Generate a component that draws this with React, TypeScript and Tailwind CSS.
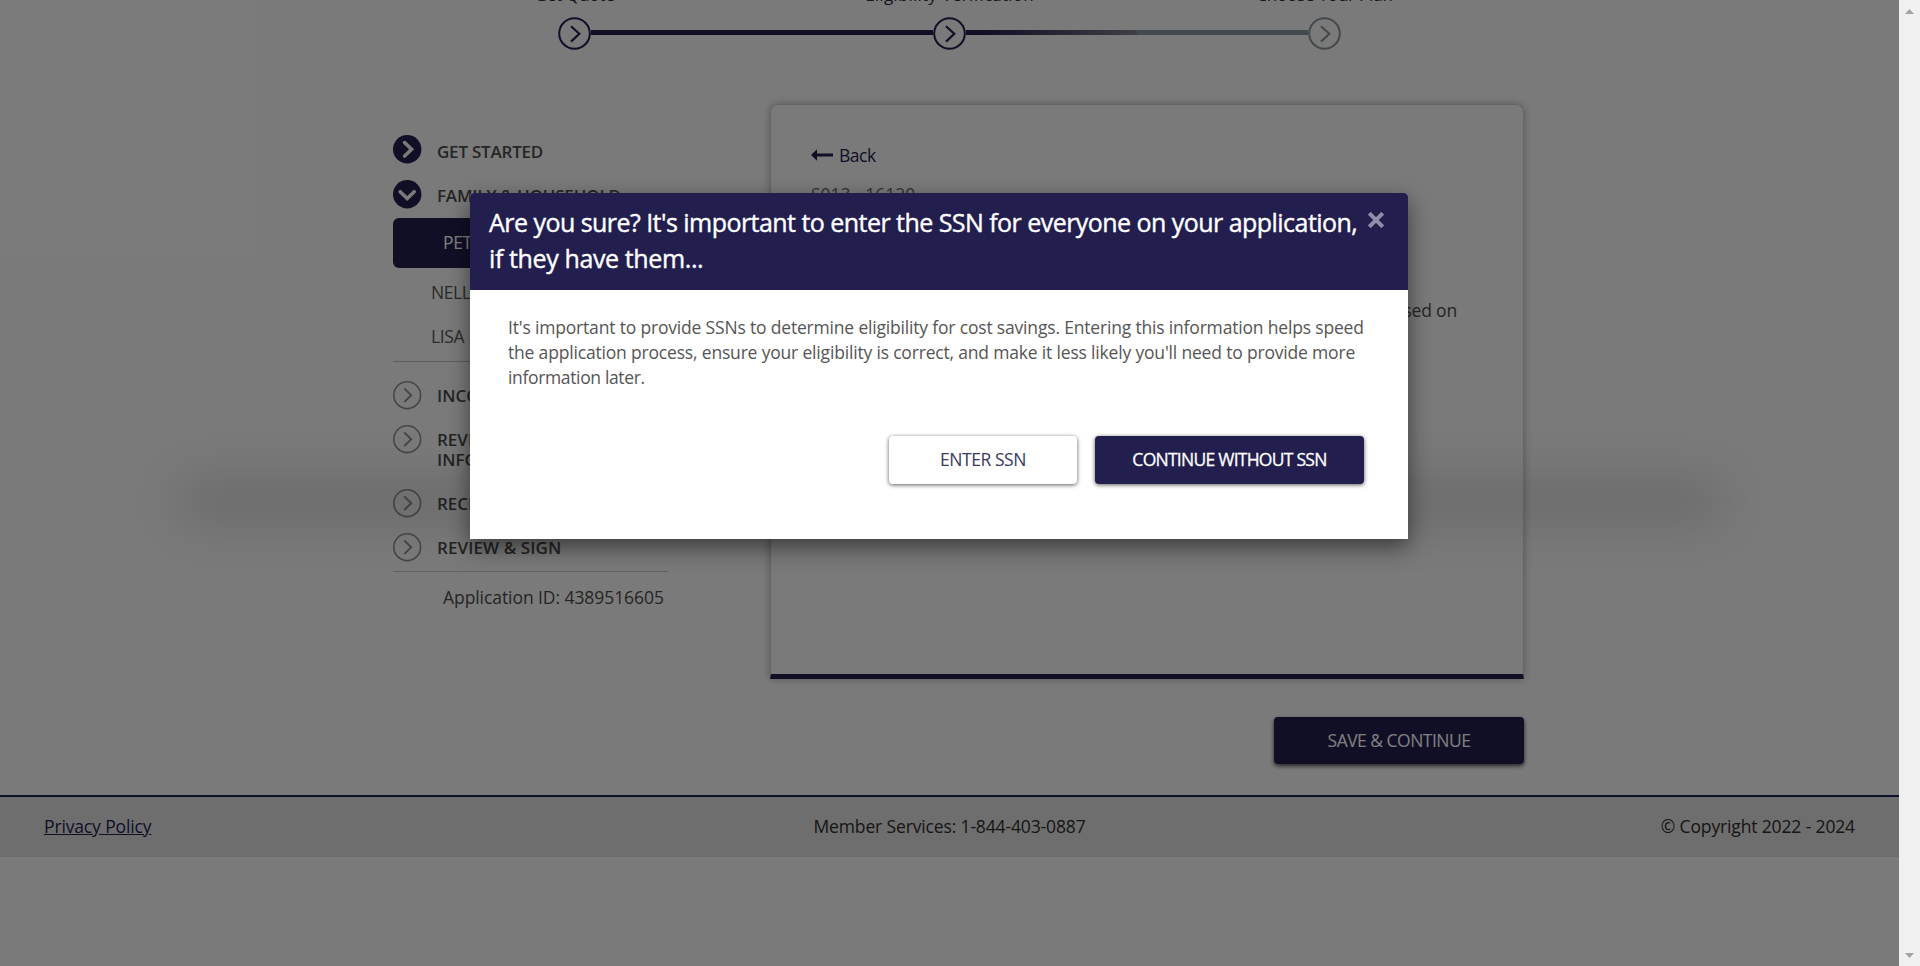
import type { ReactNode } from "react";

function StepCircle({ tone }: { tone: string }) {
  return (
    <svg viewBox="0 0 33 33" className={`h-[33px] w-[33px] shrink-0 ${tone}`} fill="none" stroke="currentColor" strokeWidth="2">
      <circle cx="16.5" cy="16.5" r="15.3" />
      <path d="M13 9.2 21.3 16.8 13 24.6" strokeWidth="2.2" />
    </svg>
  );
}

function NavIcon({ kind }: { kind: "done" | "open" | "todo" }) {
  if (kind === "todo") {
    return (
      <svg viewBox="0 0 28 28" className="h-7 w-7 shrink-0 overflow-visible text-[#8c8c8c]" fill="none" stroke="currentColor">
        <circle cx="14.2" cy="14.2" r="13.4" strokeWidth="1.6" />
        <path d="M11.3 7.4 18.2 14.2 11.3 21" strokeWidth="1.9" />
      </svg>
    );
  }
  return (
    <svg viewBox="0 0 28 28" className="h-7 w-7 shrink-0 overflow-visible text-[#221e4c]">
      <circle cx="14.2" cy="14.2" r="14.2" fill="currentColor" />
      <path
        d={kind === "done" ? "M11.6 7.6 18.6 14.2 11.6 21" : "M7.2 11.7 14.2 18.5 21.2 11.7"}
        fill="none"
        stroke="#f5f5f5"
        strokeWidth="3.6"
        strokeLinecap="round"
      />
    </svg>
  );
}

function NavRow({ kind, height, pad, children }: { kind: "done" | "open" | "todo"; height: string; pad: string; children: ReactNode }) {
  return (
    <div className={`flex items-start gap-4 ${height}`}>
      <NavIcon kind={kind} />
      <div className={`whitespace-nowrap text-[17px] leading-5 font-semibold text-[#4a4a4a] ${pad}`}>{children}</div>
    </div>
  );
}

function Stepper() {
  return (
    <div className="mx-auto w-[1125px]">
      <div className="-mt-[15px] grid h-5 grid-cols-3 text-center text-[17px] leading-5 text-[#2b2b3c]">
        <div className="tracking-[-0.2px]">Get Quote</div>
        <div className="tracking-[0.22px]">Eligibility Verification</div>
        <div className="tracking-[-0.2px]">Choose Your Plan</div>
      </div>
      <div className="mt-3 flex items-center px-[171px]">
        <StepCircle tone="text-[#221e4c]" />
        <div className="mb-[2px] h-[5px] flex-1 bg-[#221e4c]" />
        <StepCircle tone="text-[#221e4c]" />
        <div className="mb-[2px] h-[5px] flex-1 bg-linear-to-r from-[#221e4c] from-5% via-[#7f8188] via-50% to-[#88939a] to-50%" />
        <StepCircle tone="text-[#88939a]" />
      </div>
    </div>
  );
}

function Sidebar() {
  return (
    <nav className="w-[275px] shrink-0 pt-[31px]">
      <NavRow kind="done" height="h-[45px]" pad="pt-[7px] tracking-[-0.22px]">GET STARTED</NavRow>
      <NavRow kind="open" height="h-[38px]" pad="pt-[6px] tracking-[-0.2px]">FAMILY &amp; HOUSEHOLD</NavRow>
      <div className="flex h-[50px] items-center rounded-md bg-[#221e4c] pb-px pl-[50px] text-[17.5px] tracking-[-0.4px] text-white">PETER</div>
      <div className="mt-[2px] mb-[3px] pl-[38px] text-[17.5px] leading-[44px] tracking-[-0.4px] text-[#555]">
        <div>NELLY</div>
        <div>LISA</div>
      </div>
      <div className="h-px bg-[#bbb]" />
      <div className="pt-[19px]">
        <NavRow kind="todo" height="h-11" pad="pt-[5px]">INCOME</NavRow>
        <NavRow kind="todo" height="h-16" pad="pt-[5px]">
          REVIEW
          <br />
          INFO
        </NavRow>
        <NavRow kind="todo" height="h-11" pad="pt-[5px]">RECENT</NavRow>
        <NavRow kind="todo" height="h-[38px]" pad="pt-[5px] tracking-[0.08px]">REVIEW &amp; SIGN</NavRow>
      </div>
      <div className="h-px bg-[#c4c4c4]" />
      <div className="mt-[11px] pl-[50px] text-[17.5px] leading-7 tracking-[-0.07px] whitespace-nowrap text-[#4a4a4a]">Application ID: 4389516605</div>
    </nav>
  );
}

function PageCard() {
  return (
    <section className="flex h-[575px] w-[754px] flex-col rounded-t-lg border border-b-[5px] border-[#c8c8c8] border-b-[#221e4c] px-10 pt-[38px] text-[17.5px] leading-6 shadow-[0_0_8px_rgba(0,0,0,0.28)]">
      <div className="flex items-center gap-[6px] tracking-[-0.5px] text-[#221e4c]">
        <svg viewBox="0 0 22 12" className="h-3 w-[22px]" fill="currentColor">
          <path d="M0 6 6 .3V4.6H22V7.6H6V11.7Z" />
        </svg>
        Back
      </div>
      <div className="mt-[15px] text-[#666]">S013 - 16120</div>
      <div className="mt-[92px] pr-[26px] text-right tracking-[-0.18px] text-[#4a4a4a]">based on</div>
    </section>
  );
}

function Modal() {
  return (
    <div className="absolute top-[193px] left-[470px] flex h-[346px] w-[938px] flex-col rounded-t bg-white shadow-[0_8px_22px_rgba(0,0,0,0.5)]">
      <div className="flex h-[97px] shrink-0 items-start justify-between rounded-t bg-[#221e4e] pt-[11px] pr-6 pl-[19px]">
        <h2 className="text-[25px] leading-9 font-medium tracking-[-0.54px] whitespace-nowrap text-white [-webkit-text-stroke:0.4px_white]">
          Are you sure? It's important to enter the SSN for everyone on your application,
          <br />
          <span className="tracking-[-0.38px]">if they have them...</span>
        </h2>
        <svg viewBox="0 0 16 16" className="mt-2 h-4 w-4 shrink-0 text-[#918fa8]" stroke="currentColor" strokeWidth="4">
          <path d="M1.3 1.3 14.7 14.7M14.7 1.3 1.3 14.7" />
        </svg>
      </div>
      <p className="pt-[25px] pl-[38px] text-[17.5px] leading-[25px] tracking-[-0.18px] whitespace-nowrap text-[#555]">
        It's important to provide SSNs to determine eligibility for cost savings. Entering this information helps speed
        <br />
        the application process, ensure your eligibility is correct, and make it less likely you'll need to provide more
        <br />
        <span className="tracking-[-0.35px]">information later.</span>
      </p>
      <div className="mt-[46px] flex justify-end gap-[18px] pr-11 text-[17.5px]">
        <button className="h-12 w-[188px] rounded bg-white pb-px tracking-[-0.45px] text-[#3a3760] shadow-[0_1px_4px_rgba(0,0,0,0.65)]">ENTER SSN</button>
        <button className="h-12 w-[269px] rounded bg-[#221e4e] pb-px font-medium tracking-[-0.74px] text-white shadow-[0_1px_4px_rgba(0,0,0,0.65)] [-webkit-text-stroke:0.3px_white]">
          CONTINUE WITHOUT SSN
        </button>
      </div>
    </div>
  );
}

export default function App() {
  return (
    <div className="flex h-[966px] w-full overflow-hidden font-['Open_Sans','Noto_Sans',sans-serif]">
      <div className="relative w-[1899px] shrink-0 overflow-hidden bg-[#f5f5f5]">
        <div className="flex h-full flex-col">
          <Stepper />
          <main className="mt-[54px] ml-[393px] flex w-[1131px] justify-between">
            <Sidebar />
            <div className="flex flex-col items-end">
              <PageCard />
              <button className="mt-[38px] h-[47px] w-[250px] rounded bg-[#221e4c] pb-px text-[17.5px] tracking-[-0.52px] text-white shadow-[0_2px_4px_rgba(0,0,0,0.7)]">
                SAVE &amp; CONTINUE
              </button>
            </div>
          </main>
          <footer className="mt-[31px] grid h-[62px] grid-cols-3 items-center border-t-2 border-[#182050] bg-[#dcdcdc] px-11 pb-[2px] text-[17.5px] tracking-[-0.14px] text-[#2c2c2c]">
            <a className="text-[#221e4c] underline">Privacy Policy</a>
            <div className="text-center">Member Services: 1-844-403-0887</div>
            <div className="text-right">© Copyright 2022 - 2024</div>
          </footer>
        </div>
        <div className="absolute inset-0 bg-black/50" />
        <div className="absolute top-[479px] left-[175px] h-11 w-[1550px] rounded-full bg-black/12 blur-[24px]" />
        <Modal />
      </div>
      <div className="flex w-[21px] shrink-0 flex-col justify-between bg-[#f0f0f0] pt-[9px] pb-2 pl-[6px]">
        <svg viewBox="0 0 9 5" className="h-[5px] w-[9px]" fill="#a3a3a3">
          <path d="M0 5 4.5 0 9 5Z" />
        </svg>
        <svg viewBox="0 0 9 5" className="h-[5px] w-[9px]" fill="#a3a3a3">
          <path d="M0 0H9L4.5 5Z" />
        </svg>
      </div>
    </div>
  );
}
